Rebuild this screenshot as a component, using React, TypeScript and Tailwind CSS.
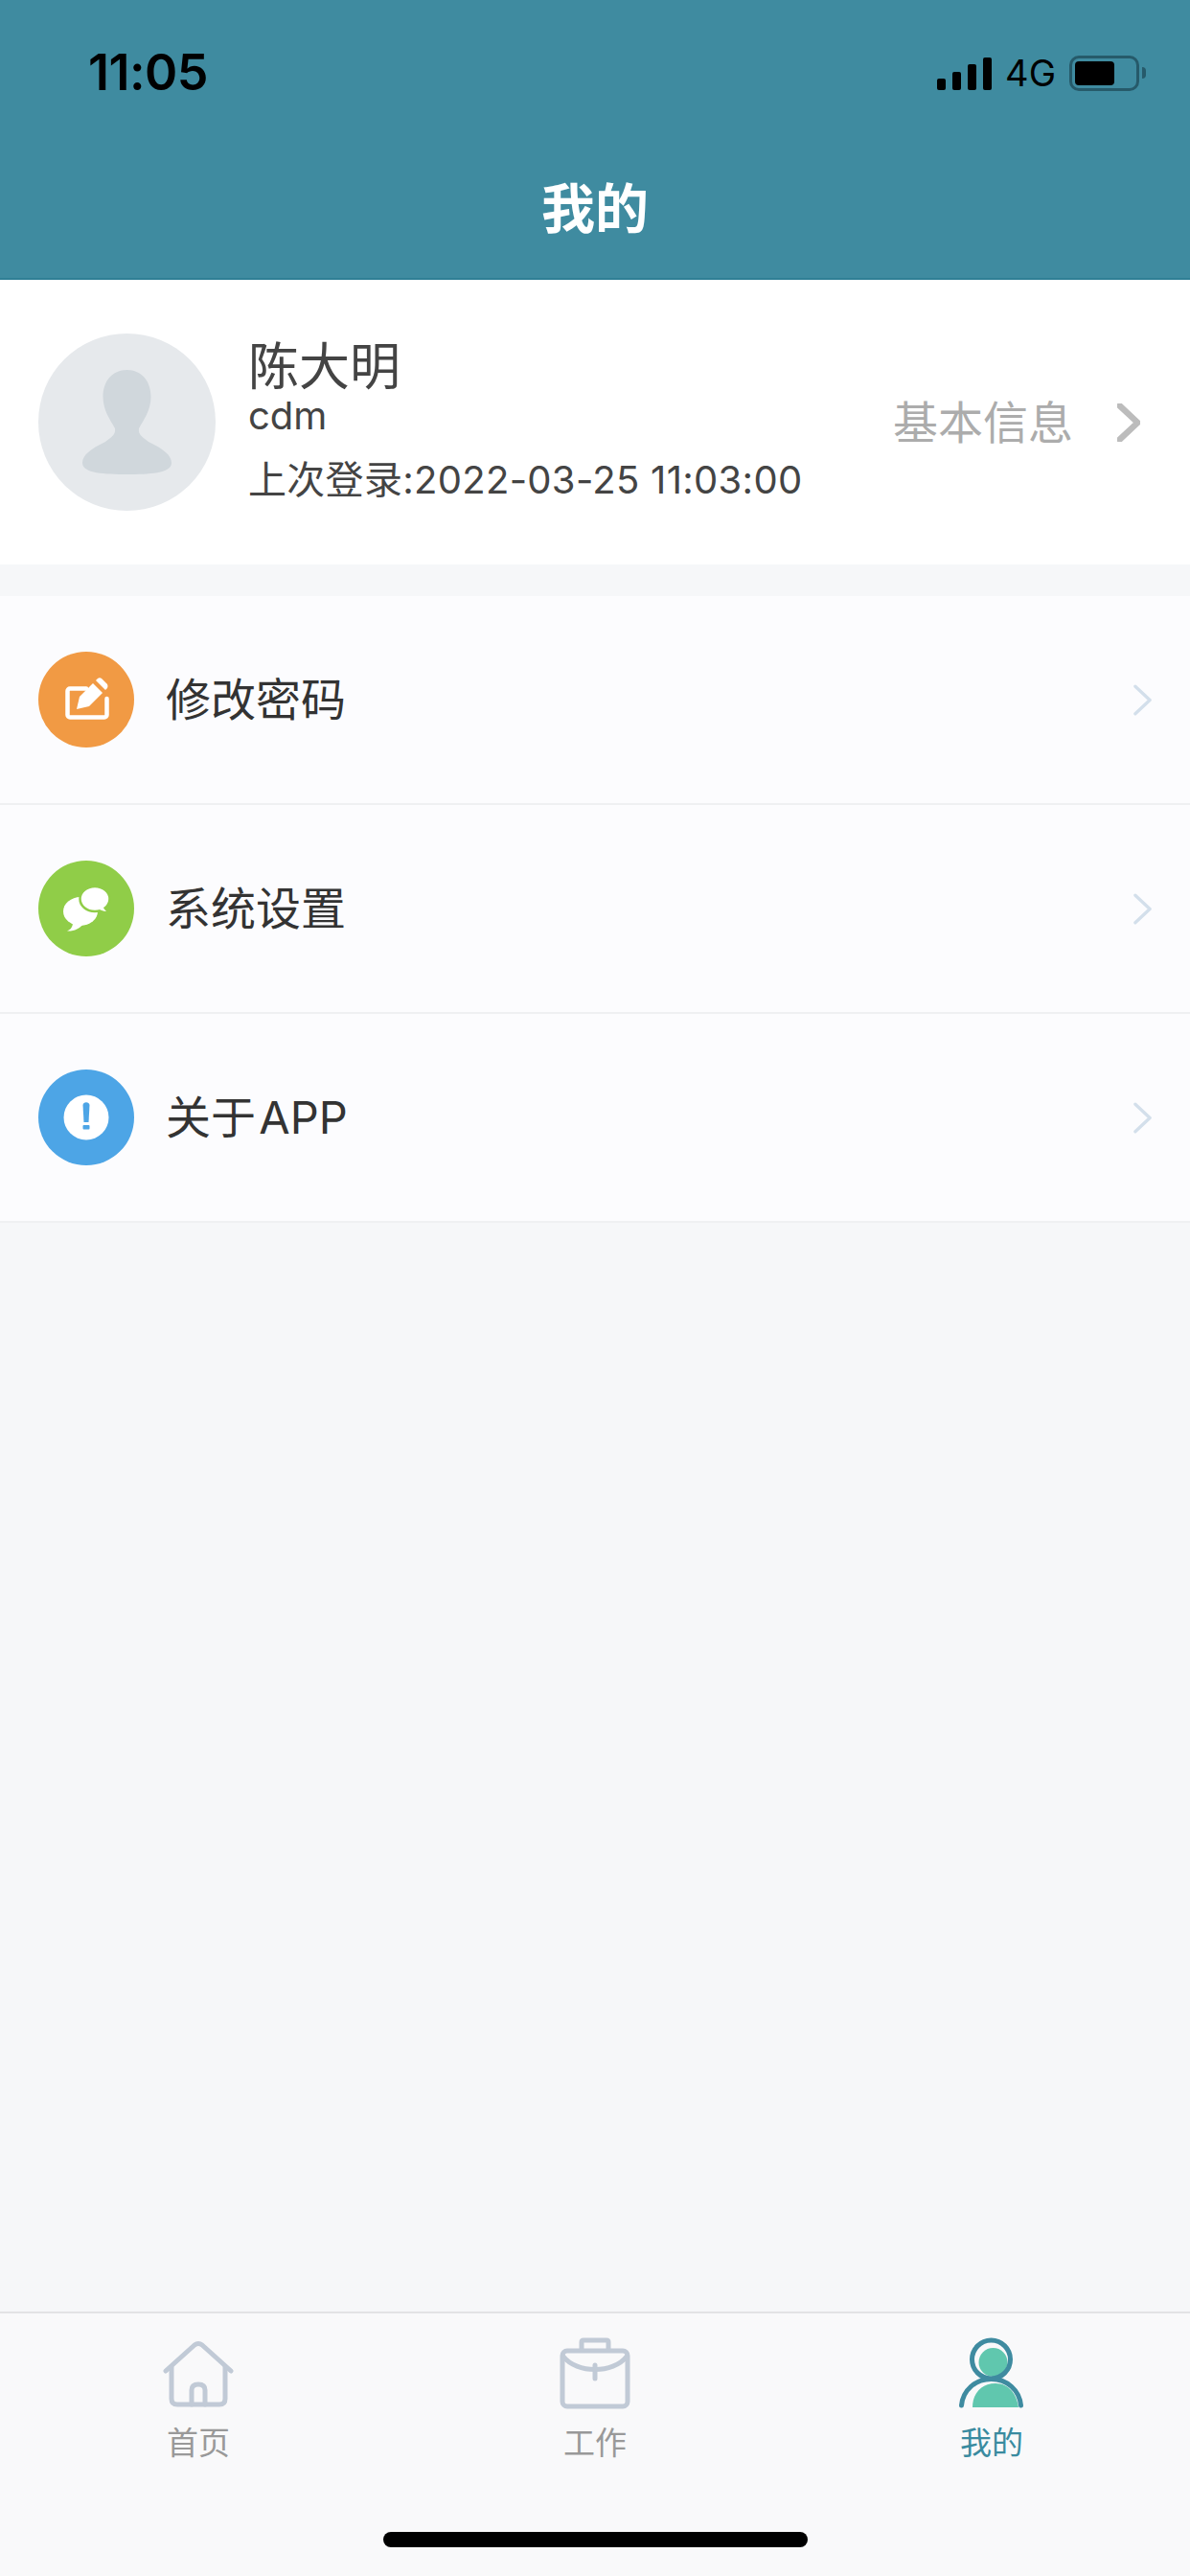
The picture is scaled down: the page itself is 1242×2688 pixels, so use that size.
const cjk = { fontFamily: '"Inter", "Noto Sans CJK SC", sans-serif' }

function Chevron({ className }: { className: string }) {
  return (
    <svg viewBox="0 0 20 34" fill="none" stroke="currentColor" strokeLinecap="round" strokeLinejoin="round" className={className}>
      <path d="M2 2 L18 17 L2 32" />
    </svg>
  )
}

function EditIcon() {
  return (
    <svg viewBox="0 0 100 100" className="w-[100px] h-[100px]">
      <circle cx="50" cy="50" r="50" fill="#f19a44" />
      <path d="M50 38.5 H33 a2.5 2.5 0 0 0 -2.5 2.5 V66 a2.5 2.5 0 0 0 2.5 2.5 H69 a2.5 2.5 0 0 0 2.5 -2.5 V49" fill="none" stroke="#fff" strokeWidth="4.5" strokeLinecap="round" />
      <path d="M40 60 L43 47 L57 33 L67 43 L53 57 Z" fill="#fff" />
      <path d="M60 30 L62 28 Q64 26.5 66 28 L72 34 Q73 36 72 38 L70 40 Z" fill="#fff" />
    </svg>
  )
}

function ChatIcon() {
  return (
    <svg viewBox="0 0 100 100" className="w-[100px] h-[100px]">
      <circle cx="50" cy="50" r="50" fill="#90cd48" />
      <ellipse cx="44" cy="53" rx="18" ry="15" fill="#fff" />
      <path d="M36 64 C36 69 34 72 30 73.5 C37 74 43 71 47 66 Z" fill="#fff" />
      <ellipse cx="59" cy="40" rx="15.5" ry="13" fill="#fff" stroke="#90cd48" strokeWidth="2.5" />
      <path d="M62 50 C64 51 68 53 71 53 C68 50 67 48 67 45 Z" fill="#fff" />
    </svg>
  )
}

function InfoIcon() {
  return (
    <svg viewBox="0 0 100 100" className="w-[100px] h-[100px]">
      <circle cx="50" cy="50" r="50" fill="#4da5e6" />
      <circle cx="50" cy="50" r="23.5" fill="#fff" />
      <path d="M46.5 37 a3.6 3.6 0 0 1 7 0 L52.5 55 H47.5 Z" fill="#4da5e6" />
      <rect x="46.5" y="58" width="7" height="4.5" rx="1" fill="#4da5e6" />
    </svg>
  )
}

const rows = [
  { title: '修改密码', icon: <EditIcon /> },
  { title: '系统设置', icon: <ChatIcon /> },
  { title: '关于 APP', icon: <InfoIcon /> },
]

export default function App() {
  return (
    <div style={cjk} className="w-[1242px] h-[2688px] flex flex-col bg-[#f6f7f9] overflow-hidden">
      {/* header */}
      <header className="h-[292px] shrink-0 bg-[#3f8ba0] border-b-2 border-[#2f7f95] flex flex-col">
        <div className="h-[183px] pl-[92px] pr-[46px] pt-[50px] flex justify-between items-start">
          <span className="text-[52px] leading-[52px] font-semibold text-black tracking-[-0.5px]">11:05</span>
          <div className="flex items-center mt-[6px]">
            <div className="flex items-end gap-[7px] h-[35px]">
              <div className="w-[9px] h-[12px] rounded-[2px] bg-black" />
              <div className="w-[9px] h-[19px] rounded-[2px] bg-black" />
              <div className="w-[9px] h-[27px] rounded-[2px] bg-black" />
              <div className="w-[9px] h-[34px] rounded-[2px] bg-black" />
            </div>
            <span className="ml-[14px] text-[38px] leading-[40px] text-black">4G</span>
            <div className="ml-[14px] w-[73px] h-[37px] rounded-[10px] border-[3px] border-[#265a6a] p-[3px]">
              <div className="w-[41px] h-full rounded-[4px] bg-black" />
            </div>
            <div className="ml-[3px] w-[4px] h-[12px] rounded-r-full bg-[#265a6a]" />
          </div>
        </div>
        <h1 className="text-center text-[56px] leading-[70px] font-semibold text-white">我的</h1>
      </header>

      {/* profile */}
      <section className="h-[297px] shrink-0 bg-white flex items-center pl-[40px] pr-[52px]">
        <svg viewBox="0 0 185 185" className="w-[185px] h-[185px] shrink-0">
          <circle cx="92.5" cy="92.5" r="92.5" fill="#e6e9ec" />
          <path d="M92.5 38 C77 38 67.5 50 67.5 66 C67.5 80 75 90 80 99 C81 106 76 108 70 113 C55 120 46 127 46 135 C46 146 70 147 92.5 147 C115 147 139 146 139 135 C139 127 130 120 115 113 C109 108 104 106 105 99 C110 90 117.5 80 117.5 66 C117.5 50 108 38 92.5 38 Z" fill="#d0d7dc" />
        </svg>
        <div className="ml-[34px] flex-1 flex flex-col text-[#444]">
          <span className="text-[53px] leading-[60px] -mt-[2px]">陈大明</span>
          <span className="text-[40px] leading-[46px] -mt-[2px]">cdm</span>
          <span className="mt-[19px] text-[40px] leading-[50px] tracking-[0.3px]">上次登录:2022-03-25 11:03:00</span>
        </div>
        <span className="text-[47px] leading-[56px] text-[#acacac]">基本信息</span>
        <Chevron className="ml-[46px] w-[24px] h-[40px] text-[#bcbcbc] stroke-[5.5]" />
      </section>

      {/* menu */}
      <section className="mt-[33px] shrink-0 bg-[#fcfcfe]">
        {rows.map((r) => (
          <div key={r.title} className="h-[218px] border-b-2 border-[#eff0f2] flex items-center pl-[40px] pr-[40px]">
            {r.icon}
            <span className="ml-[33px] flex-1 text-[47px] leading-[56px] text-[#333] [word-spacing:-10px]">{r.title}</span>
            <Chevron className="w-[19px] h-[33px] text-[#d3dfeb] stroke-[3.5]" />
          </div>
        ))}
      </section>

      <div className="flex-1" />

      {/* tab bar */}
      <nav className="h-[276px] shrink-0 bg-[#f9f9fa] border-t-2 border-[#e3e3e5] flex flex-col">
        <div className="grid grid-cols-3 pt-[24px]">
          <div className="flex flex-col items-center">
            <svg viewBox="0 0 74 76" fill="none" stroke="#c1cad6" strokeWidth="5" strokeLinecap="round" strokeLinejoin="round" className="w-[74px] h-[76px]">
              <path d="M3 36 L33 9 Q37 6 41 9 L71 36" />
              <path d="M9 32 V65 Q9 71 15 71 H59 Q65 71 65 65 V32" />
              <path d="M30 71 V56 Q30 50 37 50 Q44 50 44 56 V71" />
            </svg>
            <span className="mt-[13px] text-[33px] leading-[44px] text-[#999]">首页</span>
          </div>
          <div className="flex flex-col items-center">
            <svg viewBox="0 0 74 76" fill="none" stroke="#c1cad6" strokeWidth="5" strokeLinecap="round" strokeLinejoin="round" className="w-[74px] h-[76px]">
              <rect x="3" y="15" width="68" height="58" rx="5" />
              <path d="M23 14 V6 Q23 4 25 4 H49 Q51 4 51 6 V14" />
              <path d="M4 21 C18 39 56 39 70 21" />
              <path d="M37 30 V44" />
            </svg>
            <span className="mt-[13px] text-[33px] leading-[44px] text-[#999]">工作</span>
          </div>
          <div className="flex flex-col items-center">
            <svg viewBox="0 0 74 76" className="w-[74px] h-[76px]">
              <circle cx="38.5" cy="27" r="15" fill="#60c7ae" />
              <path d="M17 74 C17 60 26 49 41 49 C55 49 63 60 65 74 Z" fill="#60c7ae" />
              <circle cx="36.5" cy="24" r="20" fill="none" stroke="#3f8ba0" strokeWidth="5" />
              <path d="M5.5 72 C7 56 20 44.5 36.5 44.5 C53 44.5 66 56 67.5 72" fill="none" stroke="#3f8ba0" strokeWidth="5" strokeLinecap="round" />
            </svg>
            <span className="mt-[13px] text-[33px] leading-[44px] text-[#3a8ba0]">我的</span>
          </div>
        </div>
        <div className="mt-[71px] mx-auto w-[443px] h-[16px] rounded-full bg-black" />
      </nav>
    </div>
  )
}
